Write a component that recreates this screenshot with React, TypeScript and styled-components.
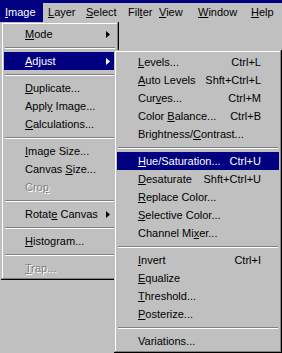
import styled, { createGlobalStyle } from "styled-components";

const GlobalStyle = createGlobalStyle`
  html, body {
    margin: 0;
    padding: 0;
    background: #c0c0c0;
  }
  body {
    font-family: "Liberation Sans", Arial, sans-serif;
    font-size: 11px;
  }
`;

export const Screen = styled.div`
  position: relative;
  width: 282px;
  height: 353px;
  overflow: hidden;
  background: #c0c0c0;
`;

export const TitleEdge = styled.div`
  height: 3px;
  background: #000080;
`;

export const MenuBar = styled.div`
  display: flex;
  height: 19px;
`;

export const BarItem = styled.div<{ $w: number; $active?: boolean }>`
  width: ${(p) => p.$w}px;
  box-sizing: border-box;
  padding-left: 5px;
  line-height: 19px;
  white-space: nowrap;
  background: ${(p) => (p.$active ? "#000080" : "transparent")};
  color: ${(p) => (p.$active ? "#fff" : "#000")};
`;

export const Menu = styled.div<{ $x: number; $y: number; $w: number }>`
  position: absolute;
  left: ${(p) => p.$x}px;
  top: ${(p) => p.$y}px;
  width: ${(p) => p.$w}px;
  box-sizing: border-box;
  padding: 3px;
  background: #c0c0c0;
  box-shadow: inset -1px -1px #000, inset 1px 1px #c0c0c0,
    inset -2px -2px #808080, inset 2px 2px #fff;
`;

export const Item = styled.div<{ $active?: boolean; $disabled?: boolean }>`
  display: flex;
  align-items: center;
  height: 18px;
  padding: 0 6px 0 21px;
  white-space: nowrap;
  background: ${(p) => (p.$active ? "#000080" : "transparent")};
  color: ${(p) => (p.$active ? "#fff" : p.$disabled ? "#808080" : "#000")};
  text-shadow: ${(p) => (p.$disabled ? "1px 1px 0 #fff" : "none")};
`;

export const Label = styled.span`
  flex: 1;
`;

export const Shortcut = styled.span`
  margin-right: 12px;
`;

export const Key = styled.span`
  text-decoration: underline;
`;

export const Separator = styled.div`
  height: 9px;
  box-sizing: border-box;
  padding: 4px 1px 0;
  &::before {
    content: "";
    display: block;
    border-top: 1px solid #808080;
    border-bottom: 1px solid #fff;
  }
`;

type Entry =
  | "sep"
  | {
      label: string;
      key?: number;
      sub?: boolean;
      active?: boolean;
      disabled?: boolean;
      shortcut?: string;
    };

const bar = [
  { label: "Image", key: 0, w: 43, active: true },
  { label: "Layer", key: 0, w: 38 },
  { label: "Select", key: 0, w: 42 },
  { label: "Filter", key: 3, w: 31 },
  { label: "View", key: 0, w: 39 },
  { label: "Window", key: 0, w: 53 },
  { label: "Help", key: 0, w: 36 },
];

const imageMenu: Entry[] = [
  { label: "Mode", key: 0, sub: true },
  "sep",
  { label: "Adjust", key: 0, sub: true, active: true },
  "sep",
  { label: "Duplicate...", key: 0 },
  { label: "Apply Image...", key: 4 },
  { label: "Calculations...", key: 0 },
  "sep",
  { label: "Image Size...", key: 0 },
  { label: "Canvas Size...", key: 7 },
  { label: "Crop", key: 3, disabled: true },
  "sep",
  { label: "Rotate Canvas", key: 5, sub: true },
  "sep",
  { label: "Histogram...", key: 0 },
  "sep",
  { label: "Trap...", key: 0, disabled: true },
];

const adjustMenu: Entry[] = [
  { label: "Levels...", key: 0, shortcut: "Ctrl+L" },
  { label: "Auto Levels", key: 0, shortcut: "Shft+Ctrl+L" },
  { label: "Curves...", key: 3, shortcut: "Ctrl+M" },
  { label: "Color Balance...", key: 6, shortcut: "Ctrl+B" },
  { label: "Brightness/Contrast...", key: 11 },
  "sep",
  { label: "Hue/Saturation...", key: 0, shortcut: "Ctrl+U", active: true },
  { label: "Desaturate", key: 0, shortcut: "Shft+Ctrl+U" },
  { label: "Replace Color...", key: 0 },
  { label: "Selective Color...", key: 0 },
  { label: "Channel Mixer...", key: 10 },
  "sep",
  { label: "Invert", key: 0, shortcut: "Ctrl+I" },
  { label: "Equalize", key: 0 },
  { label: "Threshold...", key: 0 },
  { label: "Posterize...", key: 0 },
  "sep",
  { label: "Variations..." },
];

function Mnemonic({ text, at }: { text: string; at?: number }) {
  if (at === undefined) return <>{text}</>;
  return (
    <>
      {text.slice(0, at)}
      <Key>{text[at]}</Key>
      {text.slice(at + 1)}
    </>
  );
}

function Arrow({ color }: { color: string }) {
  return (
    <svg width="4" height="7" viewBox="0 0 4 7">
      <polygon points="0,0 4,3.5 0,7" fill={color} />
    </svg>
  );
}

function MenuList({ entries }: { entries: Entry[] }) {
  return (
    <>
      {entries.map((e, i) =>
        e === "sep" ? (
          <Separator key={i} />
        ) : (
          <Item key={i} $active={e.active} $disabled={e.disabled}>
            <Label>
              <Mnemonic text={e.label} at={e.key} />
            </Label>
            {e.shortcut && <Shortcut>{e.shortcut}</Shortcut>}
            {e.sub && <Arrow color={e.active ? "#fff" : "#000"} />}
          </Item>
        )
      )}
    </>
  );
}

function App() {
  return (
    <>
      <GlobalStyle />
      <Screen>
        <TitleEdge />
        <MenuBar>
          {bar.map((b) => (
            <BarItem key={b.label} $w={b.w} $active={b.active}>
              <Mnemonic text={b.label} at={b.key} />
            </BarItem>
          ))}
        </MenuBar>
        <Menu $x={1} $y={22} $w={118}>
          <MenuList entries={imageMenu} />
        </Menu>
        <Menu $x={114} $y={50} $w={168}>
          <MenuList entries={adjustMenu} />
        </Menu>
      </Screen>
    </>
  );
}

export default App;
